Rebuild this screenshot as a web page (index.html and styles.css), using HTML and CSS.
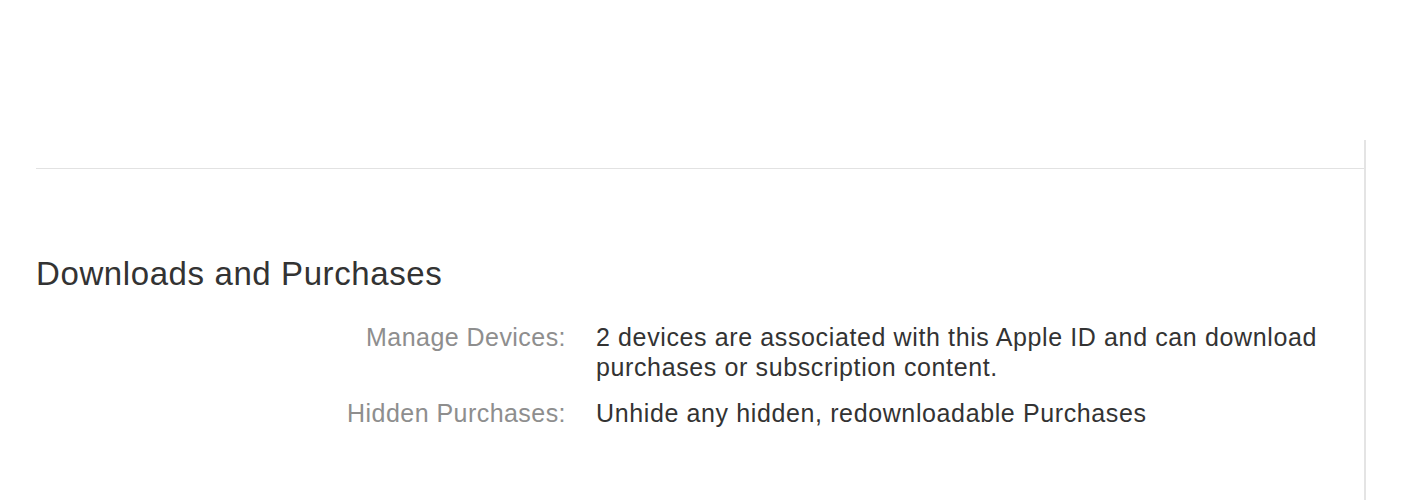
FILE: index.html
```html
<!DOCTYPE html>
<html>
<head>
<meta charset="utf-8">
<link rel="stylesheet" href="styles.css">
</head>
<body>
<div class="page">
  <div class="panel">
    <div class="rule"></div>
    <section class="section">
      <h2 class="section-title">Downloads and Purchases</h2>
      <div class="rows">
        <div class="row">
          <div class="label">Manage Devices:</div>
          <div class="value">2 devices are associated with this Apple ID and can download purchases or subscription content.</div>
        </div>
        <div class="row">
          <div class="label">Hidden Purchases:</div>
          <div class="value">Unhide any hidden, redownloadable Purchases</div>
        </div>
      </div>
    </section>
  </div>
</div>
</body>
</html>
```

FILE: styles.css
```css
html, body {
  margin: 0;
  padding: 0;
  background: #ffffff;
  height: 100%;
  overflow: hidden;
}
body {
  font-family: "Liberation Sans", Arial, Helvetica, sans-serif;
  color: #333333;
}
.page {
  padding-top: 140px;
  height: 360px;
}
.panel {
  margin-left: 36px;
  width: 1330px;
  height: 100%;
  border-right: 2px solid #e4e4e4;
  padding-top: 28px;
  box-sizing: border-box;
}
.rule {
  height: 1px;
  background: #e2e2e2;
}
.section-title {
  margin: 87px 0 0 0;
  font-size: 33px;
  letter-spacing: 0.6px;
  font-weight: normal;
  line-height: 36px;
  color: #333333;
}
.rows {
  margin-top: 30px;
  display: flex;
  flex-direction: column;
  gap: 16px;
}
.row {
  display: flex;
  gap: 30px;
  font-size: 25px;
  line-height: 30px;
}
.label {
  width: 530px;
  text-align: right;
  color: #8e8e8e;
  letter-spacing: 0.45px;
  flex: none;
}
.value {
  width: 740px;
  color: #333333;
  letter-spacing: 0.62px;
}
```
